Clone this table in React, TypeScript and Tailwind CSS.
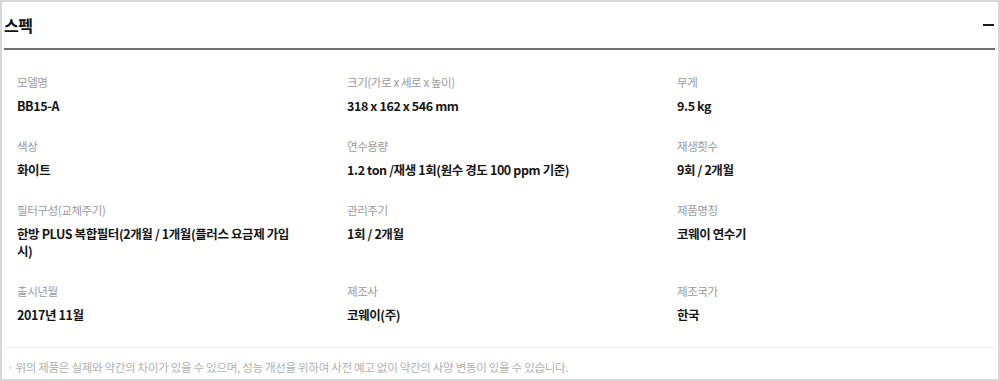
const font = { fontFamily: '"Noto Sans CJK KR", "Noto Sans", sans-serif' };

interface SpecItem {
  label: string;
  value: string;
}

const specs: SpecItem[] = [
  { label: '모델명', value: 'BB15-A' },
  { label: '크기(가로 x 세로 x 높이)', value: '318 x 162 x 546 mm' },
  { label: '무게', value: '9.5 kg' },
  { label: '색상', value: '화이트' },
  { label: '연수용량', value: '1.2 ton /재생 1회(원수 경도 100 ppm 기준)' },
  { label: '재생횟수', value: '9회 / 2개월' },
  { label: '필터구성(교체주기)', value: '한방 PLUS 복합필터(2개월 / 1개월(플러스 요금제 가입 시)' },
  { label: '관리주기', value: '1회 / 2개월' },
  { label: '제품명칭', value: '코웨이 연수기' },
  { label: '출시년월', value: '2017년 11월' },
  { label: '제조사', value: '코웨이(주)' },
  { label: '제조국가', value: '한국' },
];

export default function App() {
  return (
    <div
      className="w-[1000px] h-[381px] bg-white border-2 border-[#d8d8d8] pl-[2px] pr-[3px] flex flex-col"
      style={font}
    >
      {/* section header */}
      <div className="h-[48px] flex items-center justify-between border-b-2 border-[#707070]">
        <h2 className="text-[16px] font-bold text-[#111] tracking-[-0.5px]">스펙</h2>
        <span className="w-[11px] h-[2.5px] bg-[#1a1a1a] mr-[1px]" />
      </div>

      {/* spec grid */}
      <div className="grid grid-cols-[330px_330px_330px] gap-y-[22px] pl-[13px] pt-[22px] pb-[24px] border-b border-[#ececec]">
        {specs.map((s) => (
          <div key={s.label} className="pr-[48px]">
            <p className="text-[11.5px] leading-[20px] text-[#9a9a9a] tracking-[-0.4px]">{s.label}</p>
            <p className="mt-[5px] text-[12.5px] leading-[17px] font-bold text-[#161616] tracking-[-0.4px]">
              {s.value}
            </p>
          </div>
        ))}
      </div>

      {/* footnote */}
      <p className="pl-[3px] pt-[11px] text-[11.5px] leading-[16px] text-[#b0b0b0] tracking-[-0.3px]">
        · 위의 제품은 실제와 약간의 차이가 있을 수 있으며, 성능 개선을 위하여 사전 예고 없이 약간의 사양 변동이 있을 수 있습니다.
      </p>
    </div>
  );
}
